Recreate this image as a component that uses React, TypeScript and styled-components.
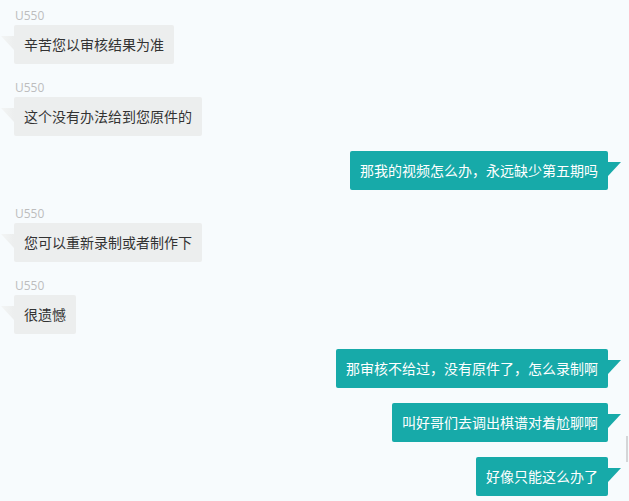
import { createGlobalStyle, styled } from "styled-components";

type Message = {
  id: number;
  mine: boolean;
  name?: string;
  text: string;
};

const messages: Message[] = [
  { id: 1, mine: false, name: "U550", text: "辛苦您以审核结果为准" },
  { id: 2, mine: false, name: "U550", text: "这个没有办法给到您原件的" },
  { id: 3, mine: true, text: "那我的视频怎么办，永远缺少第五期吗" },
  { id: 4, mine: false, name: "U550", text: "您可以重新录制或者制作下" },
  { id: 5, mine: false, name: "U550", text: "很遗憾" },
  { id: 6, mine: true, text: "那审核不给过，没有原件了，怎么录制啊" },
  { id: 7, mine: true, text: "叫好哥们去调出棋谱对着尬聊啊" },
  { id: 8, mine: true, text: "好像只能这么办了" },
];

const App = () => {
  return (
    <>
      <GlobalStyle />
      <ChatWindow>
        {messages.map((msg) => (
          <MessageRow key={msg.id} $mine={msg.mine}>
            {msg.name && <SenderName>{msg.name}</SenderName>}
            <Bubble $mine={msg.mine}>{msg.text}</Bubble>
          </MessageRow>
        ))}
        <ScrollThumb />
      </ChatWindow>
    </>
  );
};

export default App;

const GlobalStyle = createGlobalStyle`
  html, body {
    margin: 0;
    padding: 0;
    background: #f7fbfd;
  }
  body {
    font-family: "Noto Sans", "Noto Sans CJK SC", sans-serif;
  }
`;

const ChatWindow = styled.div`
  position: relative;
  width: 629px;
  height: 501px;
  box-sizing: border-box;
  padding: 7px 21px 0 14px;
  display: flex;
  flex-direction: column;
  gap: 15px;
  background: #f7fbfd;
  overflow: hidden;
`;

const MessageRow = styled.div<{ $mine: boolean }>`
  display: flex;
  flex-direction: column;
  align-items: ${(p) => (p.$mine ? "flex-end" : "flex-start")};
`;

const SenderName = styled.div`
  height: 18px;
  line-height: 18px;
  padding-left: 1px;
  font-size: 12px;
  color: #bdbdbd;
  font-family: "Open Sans", "Noto Sans CJK SC", sans-serif;
`;

const Bubble = styled.div<{ $mine: boolean }>`
  position: relative;
  padding: 10px;
  font-size: 14px;
  line-height: 19px;
  border-radius: 2px;
  font-family: "Noto Sans CJK SC", sans-serif;
  color: ${(p) => (p.$mine ? "#ffffff" : "#333333")};
  background: ${(p) => (p.$mine ? "#17aaa9" : "#eceeee")};

  &::before {
    content: "";
    position: absolute;
    top: ${(p) => (p.$mine ? "11px" : "11px")};
    ${(p) => (p.$mine ? "right: -13px;" : "left: -13px;")}
    width: 13px;
    height: 14px;
    background: ${(p) =>
      p.$mine ? "#17aaa9" : "linear-gradient(to right, #f3f5f5, #eceeee)"};
    clip-path: ${(p) =>
      p.$mine
        ? "polygon(0 0, 100% 0, 0 100%)"
        : "polygon(0 0, 100% 0, 100% 100%)"};
  }
`;

const ScrollThumb = styled.div`
  position: absolute;
  right: 1px;
  top: 436px;
  width: 2px;
  height: 26px;
  background: #d4d6d8;
`;
